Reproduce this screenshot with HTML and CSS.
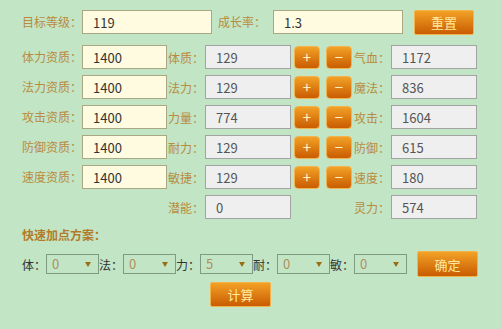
FILE: index.html
```html
<!DOCTYPE html>
<html lang="zh-CN">
  <head>
    <meta charset="UTF-8" />
    <meta name="viewport" content="width=device-width, initial-scale=1.0" />
    <title>加点计算</title>
    <link rel="stylesheet" href="styles.css">
  </head>
  <body>
    <div class="panel">
      <div class="row topRow">
        <span class="lbl">目标等级：</span>
        <input class="inYellow wide" type="text" value="119" />
        <span class="lbl rateLbl">成长率：</span>
        <input class="inYellow wide" type="text" value="1.3" />
        <button class="btn bigBtn resetBtn">重置</button>
      </div>

      <div class="row">
        <span class="lbl">体力资质：</span>
        <input class="inYellow" type="text" value="1400" />
        <span class="lbl2">体质：</span>
        <input class="inGrey" type="text" value="129" readonly />
        <button class="btn smBtn">+</button>
        <button class="btn smBtn minus">−</button>
        <span class="lbl3">气血：</span>
        <input class="inGrey" type="text" value="1172" readonly />
      </div>

      <div class="row">
        <span class="lbl">法力资质：</span>
        <input class="inYellow" type="text" value="1400" />
        <span class="lbl2">法力：</span>
        <input class="inGrey" type="text" value="129" readonly />
        <button class="btn smBtn">+</button>
        <button class="btn smBtn minus">−</button>
        <span class="lbl3">魔法：</span>
        <input class="inGrey" type="text" value="836" readonly />
      </div>

      <div class="row">
        <span class="lbl">攻击资质：</span>
        <input class="inYellow" type="text" value="1400" />
        <span class="lbl2">力量：</span>
        <input class="inGrey" type="text" value="774" readonly />
        <button class="btn smBtn">+</button>
        <button class="btn smBtn minus">−</button>
        <span class="lbl3">攻击：</span>
        <input class="inGrey" type="text" value="1604" readonly />
      </div>

      <div class="row">
        <span class="lbl">防御资质：</span>
        <input class="inYellow" type="text" value="1400" />
        <span class="lbl2">耐力：</span>
        <input class="inGrey" type="text" value="129" readonly />
        <button class="btn smBtn">+</button>
        <button class="btn smBtn minus">−</button>
        <span class="lbl3">防御：</span>
        <input class="inGrey" type="text" value="615" readonly />
      </div>

      <div class="row">
        <span class="lbl">速度资质：</span>
        <input class="inYellow" type="text" value="1400" />
        <span class="lbl2">敏捷：</span>
        <input class="inGrey" type="text" value="129" readonly />
        <button class="btn smBtn">+</button>
        <button class="btn smBtn minus">−</button>
        <span class="lbl3">速度：</span>
        <input class="inGrey" type="text" value="180" readonly />
      </div>

      <div class="row">
        <span class="lbl"></span>
        <span class="blank"></span>
        <span class="lbl2">潜能：</span>
        <input class="inGrey" type="text" value="0" readonly />
        <span class="btnGap"></span>
        <span class="lbl3">灵力：</span>
        <input class="inGrey" type="text" value="574" readonly />
      </div>

      <div class="quickTitle">快速加点方案：</div>

      <div class="quickRow">
        <span class="qLbl">体：</span>
        <span class="selWrap"><select><option>0</option></select></span>
        <span class="qLbl">法：</span>
        <span class="selWrap"><select><option>0</option></select></span>
        <span class="qLbl">力：</span>
        <span class="selWrap"><select><option>5</option></select></span>
        <span class="qLbl">耐：</span>
        <span class="selWrap"><select><option>0</option></select></span>
        <span class="qLbl">敏：</span>
        <span class="selWrap"><select><option>0</option></select></span>
        <button class="btn bigBtn okBtn">确定</button>
      </div>

      <div class="calcRow">
        <button class="btn bigBtn">计算</button>
      </div>
    </div>
  </body>
</html>
```

FILE: styles.css
```css
body {
  margin: 0;
  background: #c2e5c6;
  font-family: "Noto Sans CJK SC", "Liberation Sans", sans-serif;
  font-size: 12px;
}

.panel {
  padding: 10px 0 0 22px;
}

.row {
  display: flex;
  align-items: center;
  height: 24px;
  margin-bottom: 6px;
}

.topRow {
  height: 25px;
  margin-bottom: 10px;
  align-items: flex-start;
}

.lbl {
  width: 60px;
  color: #b98b3e;
  line-height: 24px;
}

.rateLbl {
  width: 55px;
  margin-left: 6px;
}

.lbl2 {
  width: 37px;
  color: #b98b3e;
  margin-left: 1px;
}

.lbl3 {
  width: 37px;
  color: #b98b3e;
  margin-left: 2px;
}

input {
  box-sizing: border-box;
  height: 24px;
  margin: 0;
  padding: 0 0 0 10px;
  font-family: "Noto Sans CJK SC", "Liberation Sans", sans-serif;
  font-size: 13px;
  outline: none;
}

.inYellow {
  width: 85px;
  background: #fffbe0;
  border: 1px solid #aaa783;
  color: #333;
}

.wide {
  width: 130px;
}

.inGrey {
  width: 86px;
  background: #efefef;
  border: 1px solid #a3a3a3;
  color: #555;
}

.blank {
  width: 85px;
}

.btnGap {
  width: 61px;
}

.btn {
  box-sizing: border-box;
  margin: 0;
  padding: 0;
  border: 1px solid #f3b24c;
  background: linear-gradient(#f2a126, #c95c02);
  color: #ffe99c;
  font-family: "Noto Sans CJK SC", "Liberation Sans", sans-serif;
  cursor: pointer;
}

.smBtn {
  width: 26px;
  height: 23px;
  margin-left: 3px;
  border-radius: 4px;
  font-size: 15px;
  line-height: 20px;
  color: #fff2c0;
}

.smBtn.minus {
  margin-left: 6px;
}

.bigBtn {
  width: 60px;
  height: 25px;
  border-radius: 2px;
  font-size: 13px;
}

.resetBtn {
  margin-left: 11px;
}

.quickTitle {
  margin-top: 4px;
  font-weight: bold;
  color: #b27b2a;
  line-height: 20px;
}

.quickRow {
  display: flex;
  align-items: center;
  margin-top: 6px;
  height: 26px;
}

.qLbl {
  width: 24px;
  color: #333;
}

.selWrap {
  position: relative;
  display: inline-block;
}

.selWrap::after {
  content: "";
  position: absolute;
  right: 8px;
  top: 8px;
  border-left: 3px solid transparent;
  border-right: 3px solid transparent;
  border-top: 5px solid #9c6e14;
  pointer-events: none;
}

select {
  box-sizing: border-box;
  appearance: none;
  -webkit-appearance: none;
  width: 53px;
  height: 20px;
  margin: 0;
  padding: 0 0 0 5px;
  background: transparent;
  border: 1px solid #7f9b82;
  border-radius: 0;
  color: #b09060;
  font-family: "Noto Sans CJK SC", "Liberation Sans", sans-serif;
  font-size: 13px;
  line-height: 18px;
  outline: none;
}

.okBtn {
  width: 61px;
  height: 26px;
  margin-left: 10px;
}

.calcRow {
  margin: 5px 0 0 188px;
}

.calcRow .bigBtn {
  width: 61px;
}
```
